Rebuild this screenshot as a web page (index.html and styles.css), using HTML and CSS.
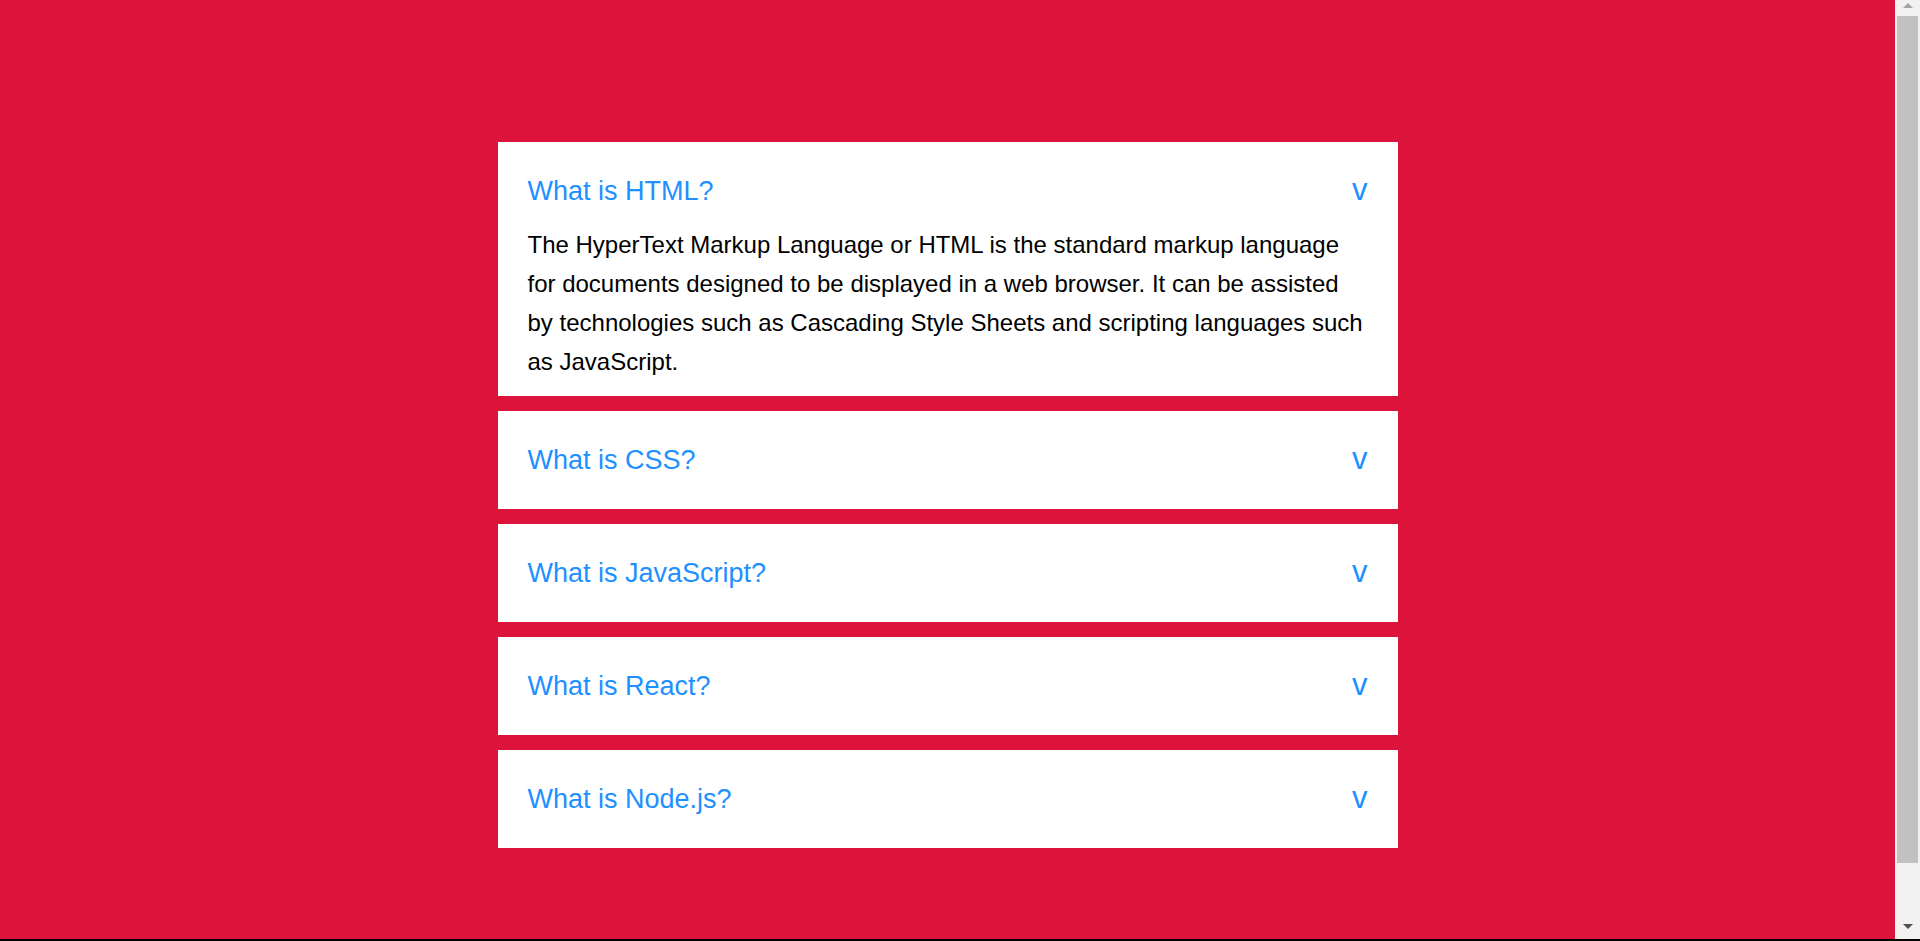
FILE: index.html
```html
<!DOCTYPE html>
<html lang="en">
<head>
<meta charset="utf-8">
<title>FAQ Accordion</title>
<link rel="stylesheet" href="styles.css">
</head>
<body>
<main class="page">
  <section class="accordion">
    <div class="item open">
      <div class="question"><span>What is HTML?</span><span class="chev">v</span></div>
      <div class="answer">The HyperText Markup Language or HTML is the standard markup language for documents designed to be displayed in a web browser. It can be assisted by technologies such as Cascading Style Sheets and scripting languages such as JavaScript.</div>
    </div>
    <div class="item">
      <div class="question"><span>What is CSS?</span><span class="chev">v</span></div>
    </div>
    <div class="item">
      <div class="question"><span>What is JavaScript?</span><span class="chev">v</span></div>
    </div>
    <div class="item">
      <div class="question"><span>What is React?</span><span class="chev">v</span></div>
    </div>
    <div class="item">
      <div class="question"><span>What is Node.js?</span><span class="chev">v</span></div>
    </div>
  </section>
</main>
<div class="scrollbar" aria-hidden="true">
  <div class="arrow up"></div>
  <div class="thumb"></div>
  <div class="arrow down"></div>
</div>
<div class="frame-edge" aria-hidden="true"></div>
</body>
</html>
```
FILE: styles.css
```css
html, body {
  margin: 0;
  padding: 0;
  height: 100%;
  overflow: hidden;
}
body {
  background: #dc143c;
  font-family: "Liberation Sans", Arial, sans-serif;
}
.page {
  display: flex;
  justify-content: center;
  padding: 142px 25px 0 0;
  box-sizing: border-box;
  height: 100%;
}
.accordion {
  width: 900px;
  display: flex;
  flex-direction: column;
  gap: 15px;
}
.item {
  background: #ffffff;
}
.question {
  display: flex;
  justify-content: space-between;
  align-items: center;
  padding: 30px;
  font-size: 27px;
  line-height: 38px;
  color: #1e90ff;
}
.item.open .question {
  padding-bottom: 15px;
}
.chev {
  font-size: 31px;
  line-height: 36px;
  padding-bottom: 2px;
}
.answer {
  padding: 0 30px 15px;
  font-size: 24px;
  line-height: 39px;
  color: #000000;
}
.scrollbar {
  position: fixed;
  top: 0;
  right: 0;
  width: 25px;
  height: 939px;
  background: #f1f1f1;
}
.thumb {
  position: absolute;
  left: 2px;
  right: 2px;
  top: 16px;
  height: 847px;
  background: #c1c1c1;
}
.arrow {
  position: absolute;
  left: 8px;
  width: 0;
  height: 0;
  border-left: 5px solid transparent;
  border-right: 5px solid transparent;
}
.arrow.up {
  top: 3px;
  border-bottom: 5px solid #a3a3a3;
}
.arrow.down {
  top: 924px;
  border-top: 5px solid #505050;
}
.frame-edge {
  position: fixed;
  left: 0;
  right: 0;
  bottom: 0;
  height: 2px;
  background: #000000;
}
```
